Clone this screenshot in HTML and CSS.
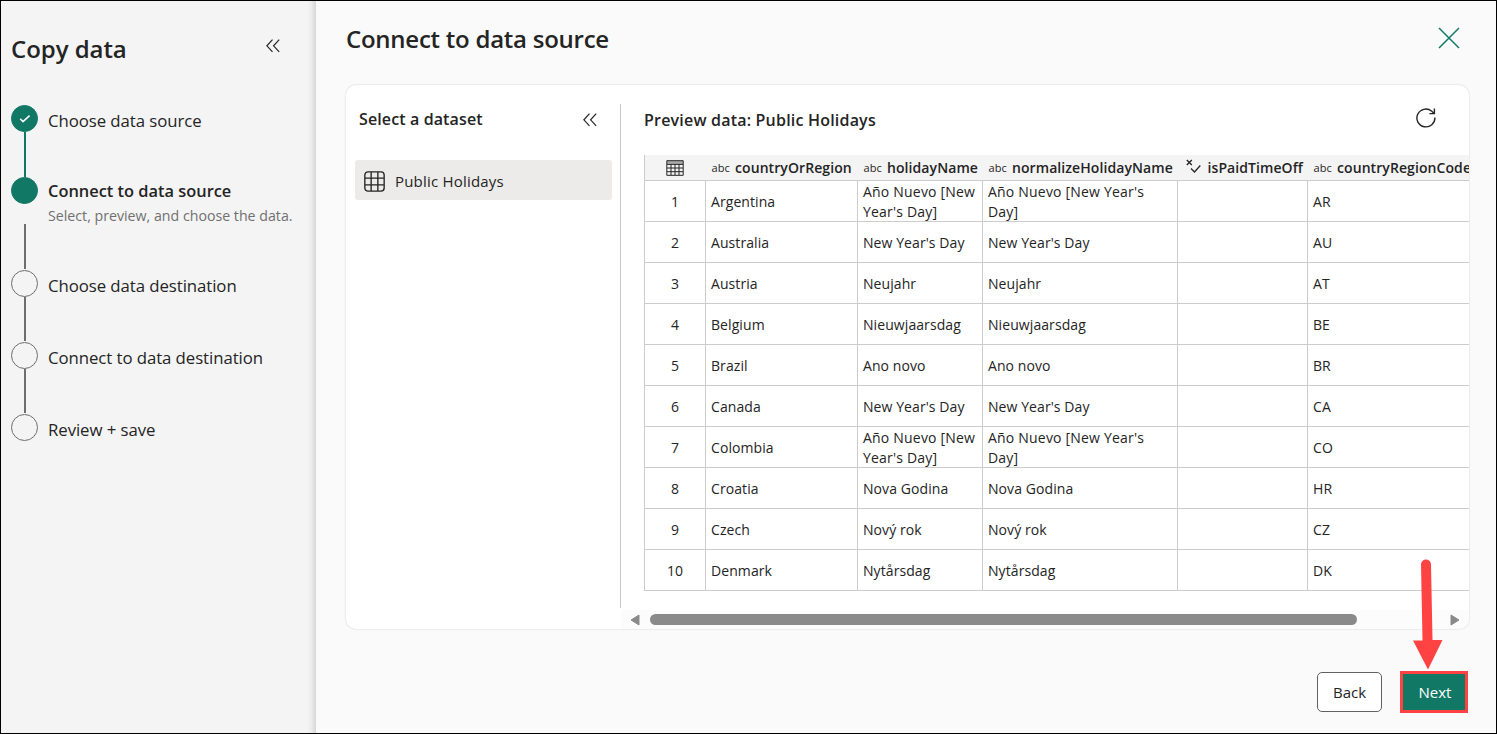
FILE: index.html
```html
<!DOCTYPE html>
<html lang="en">
<head>
<meta charset="utf-8">
<title>Copy data</title>
<link rel="stylesheet" href="styles.css">
</head>
<body>
<div class="window">
  <aside class="sidebar">
    <header class="sidebar-head">
      <h1 class="title"><span class="t-copy">Copy data</span></h1>
      <svg class="chevrons" viewBox="0 0 14 14"><path d="M6.5 .7.9 6.8l5.6 6M13.2.7 7.6 6.8l5.6 6"/></svg>
    </header>
    <ol class="steps">
      <li class="step done"><span class="rail"><span class="dot"><svg class="check" viewBox="0 0 12 10"><path d="M1.2 4.8 4 7.6l6.6-6"/></svg></span><i class="line"></i></span><span class="label">Choose data source</span></li>
      <li class="step current"><span class="rail"><span class="dot"></span><i class="line"></i></span><span class="label"><b>Connect to data source</b><small class="hint">Select, preview, and choose the data.</small></span></li>
      <li class="step"><span class="rail"><span class="dot"></span><i class="line"></i></span><span class="label">Choose data destination</span></li>
      <li class="step"><span class="rail"><span class="dot"></span><i class="line"></i></span><span class="label">Connect to data destination</span></li>
      <li class="step"><span class="rail"><span class="dot"></span></span><span class="label">Review + save</span></li>
    </ol>
  </aside>
  <main class="main">
    <header class="main-head">
      <h2 class="title"><span class="t-connect">Connect to data source</span></h2>
      <svg class="close" viewBox="0 0 22 22"><path d="m1 1 20 20M21 1 1 21"/></svg>
    </header>
    <section class="card">
      <div class="datasets">
        <div class="datasets-head"><h3 class="subtitle t-select">Select a dataset</h3>
          <svg class="chevrons" viewBox="0 0 14 14"><path d="M6.5 .7.9 6.8l5.6 6M13.2.7 7.6 6.8l5.6 6"/></svg></div>
        <div class="dataset">
          <svg class="grid-icon" viewBox="0 0 20 20"><rect x=".8" y=".8" width="18.4" height="18.4" rx="3"/><path d="M6.8 1v18M13.2 1v18M1 6.8h18M1 13.2h18"/></svg>
          <span class="dataset-name">Public Holidays</span>
        </div>
      </div>
      <div class="preview">
        <div class="preview-head"><h3 class="subtitle t-preview">Preview data: Public Holidays</h3>
          <svg class="refresh" viewBox="0 0 20 20"><path d="M18.9 9.500A9 8.900 0 1 1 15.500 3L18.200 5.400M18.400.6v5h-5"/></svg></div>
        <div class="table-clip">
          <table class="table">
            <colgroup><col class="c0"><col class="c1"><col class="c2"><col class="c3"><col class="c4"><col class="c5"></colgroup>
            <thead><tr>
              <th><svg class="table-icon" viewBox="0 0 18 16"><path class="band" d="M1 1h16v3H1z"/><path d="M.8.7h16.4v14.6H.8zM1 4.4h16M1 8h16M1 11.7h16M5 4.4V15M9 4.4V15M13 4.4V15"/></svg></th>
              <th><i class="abc">abc</i>countryOrRegion</th>
              <th><i class="abc">abc</i>holidayName</th>
              <th><i class="abc">abc</i>normalizeHolidayName</th>
              <th><svg class="bool" viewBox="0 0 15 14"><path d="m.8 1 5 5M5.8 1l-5 5M5 9.500l3.500 3.500L14.300 6.500"/></svg>isPaidTimeOff</th>
              <th><i class="abc">abc</i>countryRegionCode</th>
            </tr></thead>
            <tbody>
              <tr><td>1</td><td>Argentina</td><td class="wrapped"><div class="lines">Año Nuevo [New<br>Year's Day]</div></td><td class="wrapped"><div class="lines">Año Nuevo [New Year's<br>Day]</div></td><td></td><td>AR</td></tr>
              <tr><td>2</td><td>Australia</td><td>New Year's Day</td><td>New Year's Day</td><td></td><td>AU</td></tr>
              <tr><td>3</td><td>Austria</td><td>Neujahr</td><td>Neujahr</td><td></td><td>AT</td></tr>
              <tr><td>4</td><td>Belgium</td><td>Nieuwjaarsdag</td><td>Nieuwjaarsdag</td><td></td><td>BE</td></tr>
              <tr><td>5</td><td>Brazil</td><td>Ano novo</td><td>Ano novo</td><td></td><td>BR</td></tr>
              <tr><td>6</td><td>Canada</td><td>New Year's Day</td><td>New Year's Day</td><td></td><td>CA</td></tr>
              <tr><td>7</td><td>Colombia</td><td class="wrapped"><div class="lines">Año Nuevo [New<br>Year's Day]</div></td><td class="wrapped"><div class="lines">Año Nuevo [New Year's<br>Day]</div></td><td></td><td>CO</td></tr>
              <tr><td>8</td><td>Croatia</td><td>Nova Godina</td><td>Nova Godina</td><td></td><td>HR</td></tr>
              <tr><td>9</td><td>Czech</td><td>Nový rok</td><td>Nový rok</td><td></td><td>CZ</td></tr>
              <tr><td>10</td><td>Denmark</td><td>Nytårsdag</td><td>Nytårsdag</td><td></td><td>DK</td></tr>
            </tbody>
          </table>
        </div>
        <div class="scrollbar">
          <svg class="arrow" viewBox="0 0 10 12"><path d="M9 1v10L1 6z"/></svg>
          <span class="track"><span class="thumb"></span></span>
          <svg class="arrow" viewBox="0 0 10 12"><path d="M1 1v10l8-5z"/></svg>
        </div>
      </div>
    </section>
    <footer class="actions">
      <button class="btn back">Back</button>
      <button class="btn next">Next</button>
    </footer>
  </main>
  <svg class="pointer" viewBox="0 0 32 112"><path d="M9 5.5a5 5 0 0 1 10 0L20.5 81H30.5L16 110.500 1 81.500H10.500z"/></svg>
</div>
</body>
</html>
```
FILE: styles.css
```css
* { box-sizing: border-box; }
body { margin: 0; font-family: "Open Sans", "Noto Sans", sans-serif; color: #242424; font-size: 14px; }
h1, h2, h3 { margin: 0; padding: 0; font-weight: 600; }
svg { display: block; fill: none; stroke: #242424; flex: none; }
.window { position: relative; display: flex; width: 1497px; height: 734px; border: 1px solid #000; background: #fafafa; overflow: hidden; }

.sidebar { width: 315px; flex: none; background: linear-gradient(to right, #f4f4f4 306px, #ededed 310px, #d6d6d6 315px); padding: 28px 0 0 10px; }
.sidebar-head { display: flex; justify-content: space-between; height: 76px; padding-right: 36px; }
.title { font-size: 24px; line-height: 40px; white-space: nowrap; }
.t-copy { letter-spacing: -.05px; }
.t-connect { letter-spacing: -.25px; }
.sidebar-head .chevrons { margin-top: 10px; }
.chevrons { width: 14px; height: 14px; stroke-width: 1.2; }
.steps { list-style: none; margin: 0; padding: 0; }
.step { display: flex; height: 72px; }
.step.current { height: 93px; }
.rail { display: flex; flex-direction: column; align-items: center; width: 27px; margin-right: 10px; }
.dot { width: 27px; height: 27px; flex: none; border: 1px solid #6e6e6e; border-radius: 50%; display: flex; align-items: center; justify-content: center; }
.done .dot, .current .dot { background: #117865; border-color: #117865; }
.check { width: 12px; height: 10px; stroke: #fff; stroke-width: 1.5; }
.line { width: 2px; height: 44px; background: #6e6e6e; margin-left: 1px; }
.done .line { background: #117865; height: 45px; }
.current .line { margin-top: 20px; height: 45px; }
.label { font-size: 16.800px; line-height: 27px; letter-spacing: -.07px; padding-top: 2px; white-space: nowrap; }
.current .label { display: flex; flex-direction: column; padding-top: 0; letter-spacing: 0; }
.current b { font-weight: 600; font-size: 16.400px; }
.hint { font-size: 14.200px; line-height: 24px; color: #707070; }

.main { flex: 1; min-width: 0; padding: 0 26px 0 30px; }
.main-head { display: flex; justify-content: space-between; height: 84px; padding: 18px 10px 0 0; }
.close { width: 22px; height: 22px; margin-top: 8px; stroke: #117865; stroke-width: 1.5; }
.card { display: flex; width: 1123px; height: 544px; background: #fff; border-radius: 10px; box-shadow: 0 0 2px #0003; overflow: hidden; }
.datasets { width: 275px; height: 504px; margin-top: 19px; padding: 0 8px 0 9px; border-right: 1px solid #c8c8c8; }
.datasets-head { display: flex; justify-content: space-between; height: 56px; padding: 2px 15px 0 4px; }
.datasets-head .chevrons { margin-top: 7px; }
.subtitle { font-size: 16px; line-height: 26px; white-space: nowrap; }
.t-select { letter-spacing: .12px; }
.t-preview { letter-spacing: .2px; }
.dataset { display: flex; align-items: center; width: 257px; height: 40px; padding: 3px 0 0 9px; gap: 10px; background: #edebe9; border-radius: 3px; }
.grid-icon { width: 21px; height: 21px; stroke-width: 1.300; }
.dataset-name { font-size: 15px; line-height: 24px; letter-spacing: .2px; margin-top: -2px; }
.preview { flex: 1; min-width: 0; display: flex; flex-direction: column; }
.preview-head { display: flex; justify-content: space-between; height: 70px; padding: 22px 33px 0 23px; }
.refresh { width: 20px; height: 20px; margin-top: 1px; stroke-width: 1.400; }
.table-clip { height: 455px; padding-left: 23px; overflow: hidden; }
.table { border-collapse: collapse; table-layout: fixed; width: 873px; }
.c0 { width: 61px; } .c1 { width: 152px; } .c2 { width: 125px; } .c3 { width: 195px; } .c4 { width: 130px; } .c5 { width: 210px; }
.table th { height: 25px; padding: 2px 0 0 6px; background: #f4f4f4; text-align: left; font-weight: 600; white-space: nowrap; line-height: 20px; letter-spacing: .08px; }
.table th:first-child { border-left: 1px solid #ccc; padding-left: 21px; }
.table td { height: 41px; padding: 2px 0 0 5px; border: 1px solid #ccc; line-height: 20px; white-space: nowrap; letter-spacing: .08px; }
.table td:first-child { text-align: center; padding: 2px 0 0; }
.table td.wrapped { padding-top: 0; letter-spacing: .2px; }
.lines { margin: 1px 0 -1px; }
.table-icon { width: 18px; height: 16px; }
.band { fill: #aaa; stroke: none; }
.abc { display: inline-block; width: 23.500px; font-style: normal; font-weight: 400; font-size: 11px; vertical-align: 1px; }
.bool { display: inline-block; width: 15px; height: 14px; margin: 0 7px 0 2px; stroke-width: 1.300; vertical-align: 0; }
.scrollbar { display: flex; align-items: center; height: 19px; padding: 0 9px 0 9px; background: #fcfcfc; }
.arrow { width: 10px; height: 12px; fill: #8a8a8a; stroke: #8a8a8a; stroke-linejoin: round; }
.track { flex: 1; padding-left: 10px; }
.thumb { display: block; width: 707px; height: 11px; border-radius: 6px; background: #8a8a8a; }
.actions { display: flex; justify-content: flex-end; align-items: center; gap: 18px; margin-top: 42px; padding-right: 2px; }
.btn { font: 15px/20px "Open Sans", "Noto Sans", sans-serif; padding: 0; }
.back { width: 65px; height: 40px; border: 1px solid #616161; border-radius: 5px; background: #fff; color: #242424; }
.next { width: 68px; height: 42px; border: 3px solid #ff4343; background: #117865; color: #fff; padding-left: 2px; }
.pointer { position: absolute; left: 1411px; top: 558px; width: 32px; height: 112px; fill: #ff4343; stroke: none; }
```
